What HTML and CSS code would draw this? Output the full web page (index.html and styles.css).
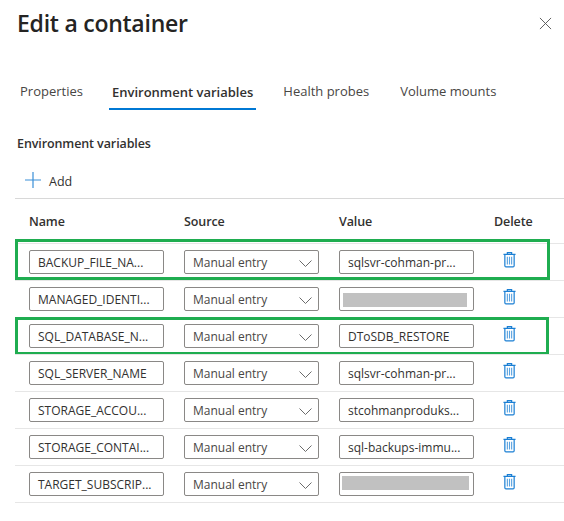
FILE: index.html
```html
<!DOCTYPE html>
<html lang="en">
<head>
<meta charset="utf-8">
<title>Edit a container</title>
<link rel="stylesheet" href="styles.css">
</head>
<body>
<svg class="defs" width="0" height="0" aria-hidden="true">
  <symbol id="trash" viewBox="0 0 14 17">
    <path d="M.5 3h13M2 3v12.200c0 .7.5 1.300 1.200 1.300h7.600c.7 0 1.200-.6 1.200-1.300V3M4.700 3V1h4.600v2" fill="none" stroke="currentColor" stroke-width="1.300"/>
    <path d="M4.700 5.500v8.500M7 5.500v8.500M9.300 5.500v8.500" fill="none" stroke="#5aa3e0" stroke-width="1.200"/>
  </symbol>
  <symbol id="chev" viewBox="0 0 13 7">
    <path d="M.5.5l6 6 6-6" fill="none" stroke="currentColor" stroke-width="1"/>
  </symbol>
</svg>
<main class="panel">
  <header class="head">
    <h1 class="title">Edit a container</h1>
    <svg class="close" viewBox="0 0 14 14"><path d="M1 1l12 12M13 1L1 13" fill="none" stroke="#555" stroke-width="1"/></svg>
  </header>
  <nav class="tabs">
    <span class="tab">Properties</span>
    <span class="tab active">Environment variables</span>
    <span class="tab">Health probes</span>
    <span class="tab">Volume mounts</span>
  </nav>
  <h2 class="section">Environment variables</h2>
  <div class="toolbar">
    <svg class="plus" viewBox="0 0 16 16"><path d="M8 0v16M0 8h16" fill="none" stroke="#3a8fd8" stroke-width="1.200"/></svg>
    <span>Add</span>
  </div>
  <div class="table">
    <div class="row heading"><span>Name</span><span>Source</span><span>Value</span><span>Delete</span></div>
    <div class="row">
      <div class="field">BACKUP_FILE_NA...</div>
      <div class="field select">Manual entry<svg class="chev"><use href="#chev"/></svg></div>
      <div class="field">sqlsvr-cohman-pr...</div>
      <svg class="trash"><use href="#trash"/></svg>
      <div class="mark mark-a"></div>
    </div>
    <div class="row">
      <div class="field">MANAGED_IDENTI...</div>
      <div class="field select">Manual entry<svg class="chev"><use href="#chev"/></svg></div>
      <div class="field masked"><span class="redact r1"></span></div>
      <svg class="trash"><use href="#trash"/></svg>
    </div>
    <div class="row">
      <div class="field">SQL_DATABASE_N...</div>
      <div class="field select">Manual entry<svg class="chev"><use href="#chev"/></svg></div>
      <div class="field">DToSDB_RESTORE</div>
      <svg class="trash"><use href="#trash"/></svg>
      <div class="mark mark-b"></div>
    </div>
    <div class="row">
      <div class="field">SQL_SERVER_NAME</div>
      <div class="field select">Manual entry<svg class="chev"><use href="#chev"/></svg></div>
      <div class="field">sqlsvr-cohman-pr...</div>
      <svg class="trash"><use href="#trash"/></svg>
    </div>
    <div class="row">
      <div class="field">STORAGE_ACCOU...</div>
      <div class="field select">Manual entry<svg class="chev"><use href="#chev"/></svg></div>
      <div class="field">stcohmanproduks...</div>
      <svg class="trash"><use href="#trash"/></svg>
    </div>
    <div class="row">
      <div class="field">STORAGE_CONTAI...</div>
      <div class="field select">Manual entry<svg class="chev"><use href="#chev"/></svg></div>
      <div class="field">sql-backups-immu...</div>
      <svg class="trash"><use href="#trash"/></svg>
    </div>
    <div class="row">
      <div class="field">TARGET_SUBSCRIP...</div>
      <div class="field select">Manual entry<svg class="chev"><use href="#chev"/></svg></div>
      <div class="field masked"><span class="redact r2"></span></div>
      <svg class="trash"><use href="#trash"/></svg>
    </div>
  </div>
</main>
</body>
</html>
```

FILE: styles.css
```css
* { box-sizing: border-box; }
html, body { margin: 0; background: #fff; }
body {
  width: 564px;
  height: 521px;
  overflow: hidden;
  font-family: "Open Sans", "Noto Sans", sans-serif;
  color: #323130;
}
.defs { position: absolute; }
.panel { padding-left: 17px; }
.head {
  display: flex;
  justify-content: space-between;
  align-items: center;
  height: 46px;
  padding-right: 12px;
}
.title {
  margin: 0;
  font-size: 23px;
  font-weight: 600;
  letter-spacing: -.25px;
  color: #252423;
  line-height: 46px;
}
.close { width: 13px; height: 13px; }
.tabs {
  display: flex;
  margin-top: 29px;
  height: 35px;
  padding-left: 3px;
  font-size: 13px;
}
.tab { padding-top: 7px; margin-right: 31px; white-space: nowrap; color: #484644; }
.tab.active {
  font-weight: 600;
  color: #323130;
  margin-left: -5px;
  margin-right: 27px;
  padding: 8px 3px 0;
  border-bottom: 2px solid #0078d4;
}
.section {
  margin: 25px 0 0;
  font-size: 12.5px;
  font-weight: 600;
  line-height: 18px;
  letter-spacing: -.1px;
}
.toolbar {
  display: flex;
  align-items: center;
  gap: 8px;
  height: 34px;
  margin-top: 11px;
  padding-left: 8px;
  font-size: 12.5px;
}
.plus { width: 16px; height: 16px; margin-top: -2px; }
.table { margin-left: -2px; }
.row {
  position: relative;
  display: grid;
  grid-template-columns: 135px 135px 135px 16px;
  column-gap: 20px;
  align-items: center;
  height: 37px;
  padding-left: 14px;
  border-top: 1px solid #e6e6e6;
}
.row:last-child { border-bottom: 1px solid #e6e6e6; height: 38px; }
.heading {
  grid-template-columns: 135px 135px 135px 60px;
  height: 45px;
  border-top: 1px solid #d8d8d8;
  font-size: 12.5px;
  font-weight: 600;
  letter-spacing: -.1px;
}
.field {
  position: relative;
  height: 24px;
  border: 1px solid #8a8886;
  border-radius: 2px;
  padding-left: 8px;
  font-size: 12px;
  line-height: 24px;
  white-space: nowrap;
  overflow: hidden;
  color: #323130;
}
.select { color: #484644; }
.chev {
  position: absolute;
  right: 6px;
  top: 9px;
  width: 13px;
  height: 7px;
  color: #6b6b6b;
}
.masked { padding: 0; }
.redact { position: absolute; background: #c1c1c1; top: 5px; height: 14px; }
.r1 { left: 3px; width: 124px; }
.r2 { left: 2px; width: 127px; top: 3px; }
.trash { width: 13px; height: 17px; margin-left: 9px; margin-top: -6px; color: #1a7fd4; }
.mark { position: absolute; border: 3px solid #1fad50; pointer-events: none; }
.mark-a { left: 0; top: -5px; width: 535px; height: 41px; }
.mark-b { left: 0; top: -1px; width: 534px; height: 38px; }
```
